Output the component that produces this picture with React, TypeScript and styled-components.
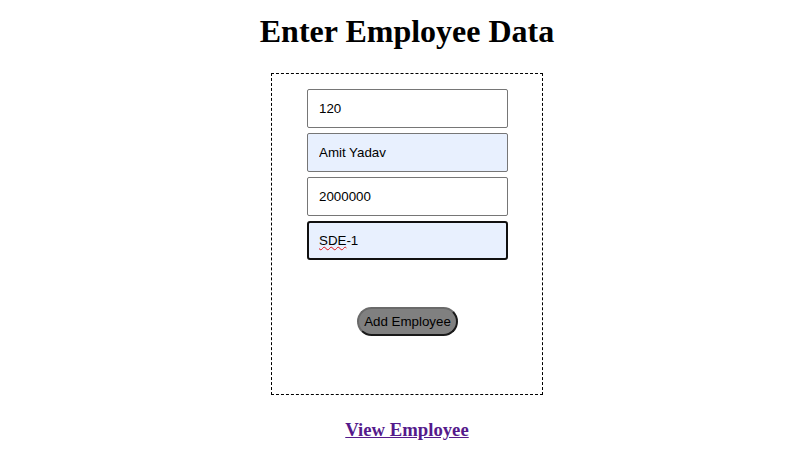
import React from "react";
import styled, { createGlobalStyle } from "styled-components";

const GlobalStyle = createGlobalStyle`
  html, body { margin: 0; padding: 0; background: #ffffff; }
  body { font-family: "Liberation Serif", "Times New Roman", serif; }
`;

const Page = styled.div`
  display: flex;
  flex-direction: column;
  align-items: center;
  padding-left: 6px;
`;

const Title = styled.h1`
  margin: 13px 0 23px;
  font-family: "Liberation Serif", serif;
  font-size: 32px;
  line-height: 37px;
  font-weight: bold;
  color: #000;
`;

const Form = styled.form`
  box-sizing: border-box;
  width: 272px;
  border: 1px dashed #000;
  padding: 15px 34px 58px 35px;
  display: flex;
  flex-direction: column;
  gap: 5px;
`;

const Field = styled.div`
  position: relative;
  width: 201px;
  height: 39px;
`;

const Input = styled.input<{ $filled?: boolean; $focused?: boolean }>`
  box-sizing: border-box;
  width: 201px;
  height: 39px;
  margin: 0;
  padding: 0 ${(p) => (p.$focused ? 10 : 11)}px;
  font-family: "Liberation Sans", Arial, sans-serif;
  font-size: 13.33px;
  color: #000;
  background: ${(p) => (p.$filled ? "#e8f0fe" : "#ffffff")};
  border: ${(p) => (p.$focused ? "2px solid #101010" : "1px solid #767676")};
  border-radius: ${(p) => (p.$focused ? 3 : 2)}px;
  outline: none;
`;

const Squiggle = styled.span`
  position: absolute;
  left: 12px;
  top: 11px;
  font-family: "Liberation Sans", Arial, sans-serif;
  font-size: 13.33px;
  line-height: 15px;
  color: transparent;
  text-decoration: underline wavy #e01010;
  text-decoration-thickness: 1px;
  text-underline-offset: 2px;
  pointer-events: none;
`;

const Button = styled.button`
  align-self: center;
  margin-top: 42px;
  box-sizing: border-box;
  width: 101px;
  height: 29px;
  padding: 0 4px;
  font-family: "Liberation Sans", Arial, sans-serif;
  font-size: 13.33px;
  color: #000;
  background: #808080;
  border: 2px solid;
  border-color: #6a6a6a #1a1a1a #1a1a1a #6a6a6a;
  border-radius: 15px;
  cursor: pointer;
`;

const LinkHeading = styled.h3`
  margin: 24px 0 0;
  font-family: "Liberation Serif", serif;
  font-size: 18.72px;
  font-weight: bold;
`;

const Link = styled.a`
  color: #551a8b;
  text-decoration: underline;
`;

export default function App() {
  return (
    <>
      <GlobalStyle />
      <Page>
        <Title>Enter Employee Data</Title>
        <Form onSubmit={(e) => e.preventDefault()}>
          <Field>
            <Input defaultValue="120" />
          </Field>
          <Field>
            <Input $filled defaultValue="Amit Yadav" />
          </Field>
          <Field>
            <Input defaultValue="2000000" />
          </Field>
          <Field>
            <Input $filled $focused defaultValue="SDE-1" />
            <Squiggle>SDE</Squiggle>
          </Field>
          <Button type="submit">Add Employee</Button>
        </Form>
        <LinkHeading>
          <Link href="#view">View Employee</Link>
        </LinkHeading>
      </Page>
    </>
  );
}
